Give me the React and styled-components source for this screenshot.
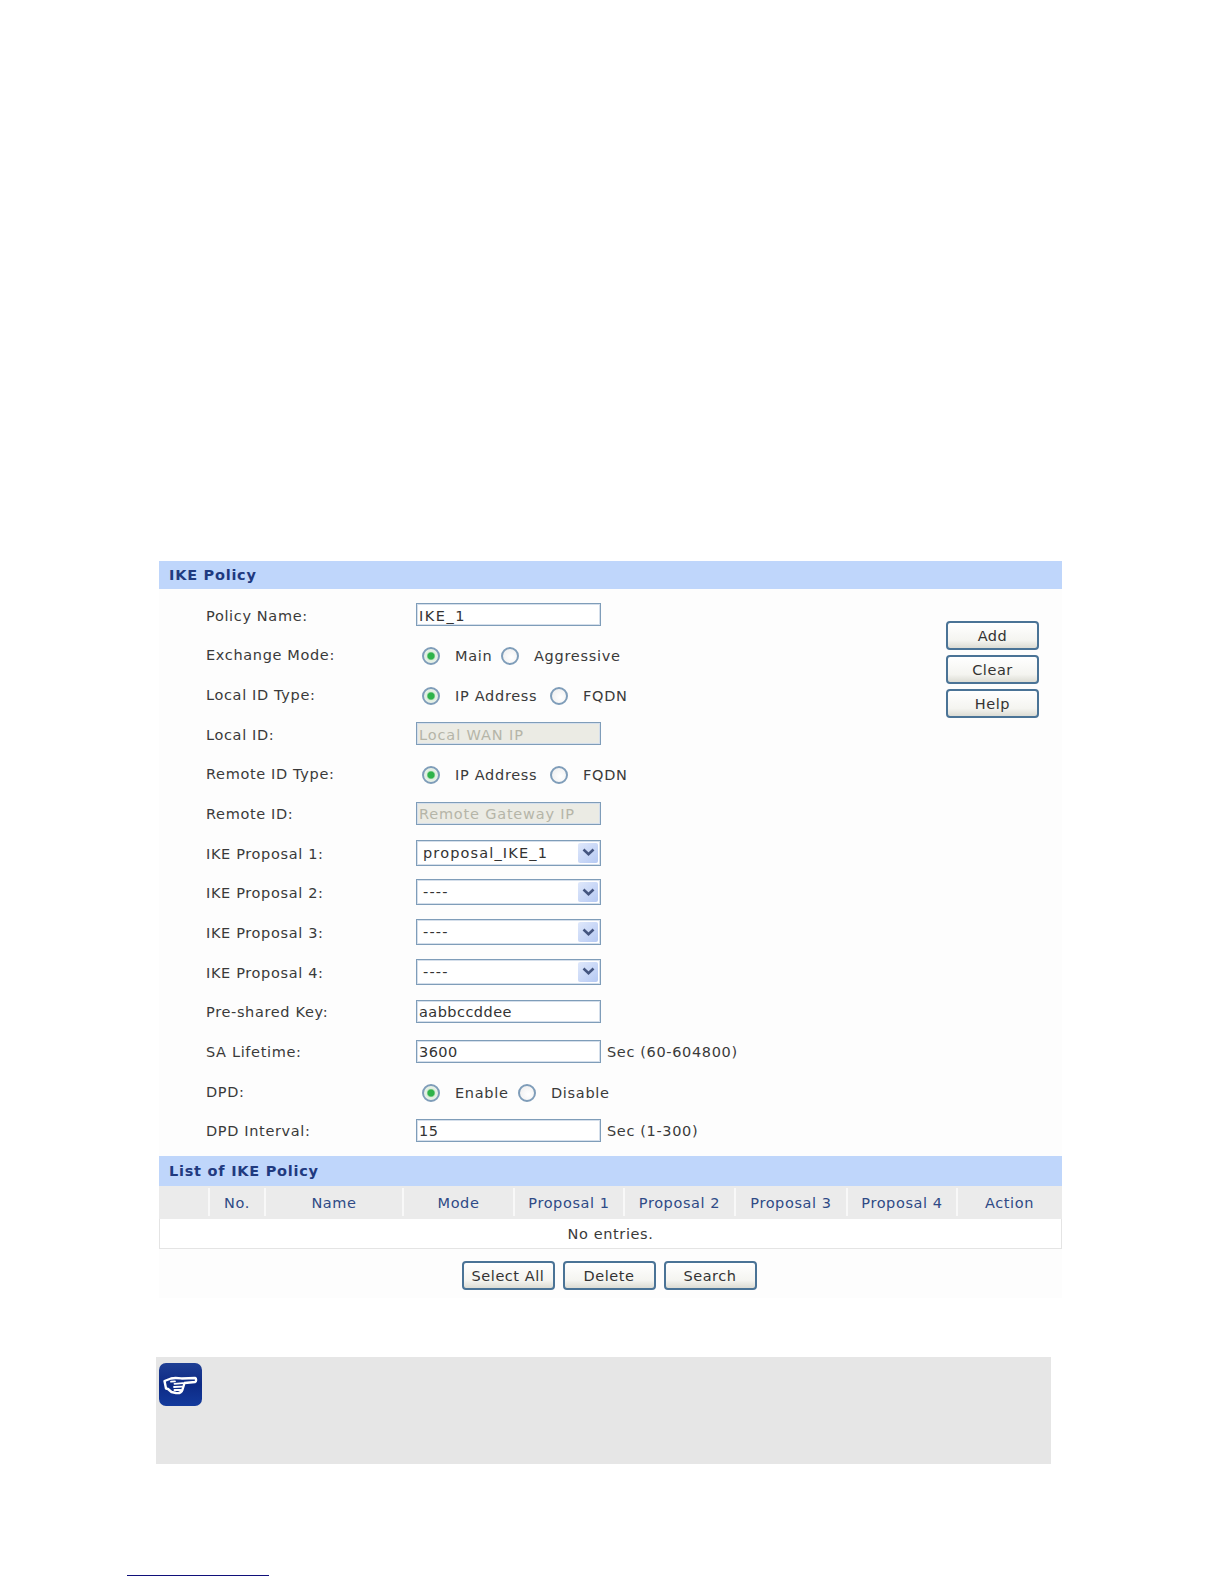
import styled, { createGlobalStyle } from 'styled-components';

const GlobalStyle = createGlobalStyle`
  html, body {
    margin: 0;
    padding: 0;
    background: #fff;
  }
  body {
    font-family: "DejaVu Sans", Verdana, sans-serif;
    font-size: 14px;
    color: #333;
  }
`;

const Page = styled.div`
  width: 1224px;
  height: 1584px;
  box-sizing: border-box;
  padding-top: 561px;
  overflow: hidden;
`;

const Panel = styled.section`
  width: 903px;
  margin-left: 159px;
  background: #fdfdfd;
`;

const SectionBar = styled.h2`
  margin: 0;
  height: ${(p) => p.$height}px;
  line-height: ${(p) => p.$height}px;
  padding-left: 10px;
  background: #bfd6fb;
  color: #1f3a80;
  font-size: 14.5px;
  font-weight: bold;
  letter-spacing: 0.75px;
`;

const FormArea = styled.div`
  display: flex;
  justify-content: space-between;
`;

const Form = styled.div`
  padding: 6px 0 6px 47px;
`;

const Row = styled.div`
  display: flex;
  align-items: center;
  height: 39.67px;
`;

const Label = styled.label`
  width: 210px;
  padding-top: 2px;
  font-size: 14.5px;
  letter-spacing: 0.65px;
  color: #3a3a3a;
`;

const TextInput = styled.input`
  width: 185px;
  height: 23px;
  box-sizing: border-box;
  padding: 2px 2px 0;
  border: 1px solid #7f9db9;
  box-shadow: inset 0 0 0 1px #d5dfeb;
  background: ${(p) => (p.disabled ? '#ebebe4' : '#fff')};
  color: #333;
  font-family: inherit;
  font-size: 14.5px;
  letter-spacing: ${(p) => p.$tracking || 0.45}px;
  outline: none;
  &:disabled {
    opacity: 1;
    -webkit-text-fill-color: #b5b5a8;
  }
`;

const Hint = styled.span`
  margin-left: 6px;
  padding-top: 2px;
  font-size: 14.5px;
  letter-spacing: 0.65px;
  color: #3a3a3a;
`;

const RadioGroup = styled.div`
  display: flex;
  align-items: center;
  padding: 4px 0 0 6px;
`;

const RadioDot = styled.span`
  display: block;
  width: 18px;
  height: 18px;
  box-sizing: border-box;
  flex: none;
  border-radius: 50%;
  border: 2px solid #7f9db9;
  background: ${(p) =>
    p.$on
      ? 'radial-gradient(circle, #2fb34a 0 3px, #dfeedf 4.5px, #f6f6f6 100%)'
      : 'radial-gradient(circle at 60% 60%, #fff 0, #ececec 100%)'};
`;

const RadioText = styled.span`
  box-sizing: border-box;
  width: ${(p) => p.$span}px;
  margin-left: 15px;
  font-size: 14.5px;
  letter-spacing: 0.7px;
  white-space: nowrap;
  color: #3a3a3a;
`;

const SelectWrap = styled.div`
  position: relative;
  width: 185px;
  height: 26px;
`;

const SelectBox = styled.select`
  display: block;
  width: 100%;
  height: 100%;
  box-sizing: border-box;
  padding: 0 0 0 6px;
  appearance: none;
  border: 1px solid #7f9db9;
  box-shadow: inset 0 0 0 1px #d5dfeb;
  border-radius: 0;
  background: #fff;
  color: #333;
  font-family: inherit;
  font-size: 14.5px;
  letter-spacing: 1.15px;
  outline: none;
`;

const SelectArrow = styled.span`
  position: absolute;
  top: 3px;
  right: 3px;
  width: 20px;
  height: 20px;
  display: flex;
  align-items: center;
  justify-content: center;
  border-radius: 2px;
  background: linear-gradient(135deg, #dfe8fb, #b5c9f3);
  pointer-events: none;
`;

const SideButtons = styled.div`
  display: flex;
  flex-direction: column;
  gap: 5px;
  margin: 32px 23px 0 0;
`;

const Button = styled.button`
  width: 93px;
  height: 29px;
  box-sizing: border-box;
  padding: 0;
  border: 2px solid #4a7396;
  border-radius: 4px;
  background: linear-gradient(#fff, #f4f4f0 70%, #dcdcd4);
  color: #333;
  font-family: inherit;
  font-size: 14.5px;
  letter-spacing: 0.55px;
`;

const Table = styled.div`
  border: 1px solid #e4e4e4;
  border-top: 0;
  background: #fff;
`;

const TableHead = styled.div`
  display: grid;
  grid-template-columns: 50px 56px 138px 111px 110px 111px 112px 110px 1fr;
  height: 33px;
  margin: 0 -1px;
  background: #ebebeb;
`;

const HeadCell = styled.div`
  position: relative;
  display: flex;
  align-items: center;
  justify-content: center;
  color: #2f4a86;
  font-size: 14.5px;
  letter-spacing: 0.6px;
  &:not(:last-child)::after {
    content: "";
    position: absolute;
    right: -1px;
    top: 2px;
    bottom: 3px;
    width: 2px;
    background: #f8f8f8;
  }
`;

const EmptyRow = styled.div`
  height: 29px;
  line-height: 31px;
  text-align: center;
  font-size: 14.5px;
  letter-spacing: 0.6px;
  color: #3a3a3a;
`;

const ActionBar = styled.div`
  display: flex;
  justify-content: center;
  gap: 8px;
  padding: 12px 3px 8px 0;
`;

const Note = styled.aside`
  width: 895px;
  height: 107px;
  box-sizing: border-box;
  margin: 59px 0 0 156px;
  padding: 6px 0 0 3px;
  background: #e6e6e6;
`;

const FootLine = styled.div`
  width: 142px;
  height: 1px;
  margin: 111px 0 0 127px;
  background: #10107a;
`;

const Chevron = () => (
  <svg width="13" height="9" viewBox="0 0 13 9">
    <path d="M1.5 1.5 L6.5 6.2 L11.5 1.5" fill="none" stroke="#44557f" strokeWidth="2.6" />
  </svg>
);

const HandIcon = () => (
  <svg width="43" height="43" viewBox="0 0 43 43" style={{ display: 'block' }}>
    <defs>
      <linearGradient id="noteBg" x1="0" y1="0" x2="0" y2="1">
        <stop offset="0" stopColor="#1f3f94" />
        <stop offset="0.5" stopColor="#0d2a85" />
        <stop offset="1" stopColor="#133a9c" />
      </linearGradient>
    </defs>
    <rect x="0" y="0" width="43" height="43" rx="7" fill="url(#noteBg)" />
    <path
      d="M5.5 18 L12 15.5 C16 14.5 19 15 23 15.5 L36 15 C37.5 15.5 37.5 18.5 36 19 L25.5 20 L23.5 26.5 C22.5 29.5 20 30.5 17 30 L12.5 29 L9 26 L7 25.5 Z"
      fill="none"
      stroke="#fff"
      strokeWidth="2.4"
      strokeLinejoin="round"
    />
    <path
      d="M15.5 20.8 L24 20.2 M15 24 L23 23.6 M15.5 27 L21.5 27 M12 18.6 L16 18.4"
      fill="none"
      stroke="#fff"
      strokeWidth="1.8"
      strokeLinecap="round"
    />
  </svg>
);

const Radios = ({ options }) => (
  <RadioGroup>
    {options.map(([text, span], i) => (
      <RadioOption key={text} text={text} span={span} on={i === 0} />
    ))}
  </RadioGroup>
);

const RadioOption = ({ text, span, on }) => (
  <>
    <RadioDot $on={on} />
    <RadioText $span={span}>{text}</RadioText>
  </>
);

const Select = ({ value }) => (
  <SelectWrap>
    <SelectBox defaultValue={value}>
      <option>{value}</option>
    </SelectBox>
    <SelectArrow>
      <Chevron />
    </SelectArrow>
  </SelectWrap>
);

const columns = ['', 'No.', 'Name', 'Mode', 'Proposal 1', 'Proposal 2', 'Proposal 3', 'Proposal 4', 'Action'];

export default function App() {
  return (
    <Page>
      <GlobalStyle />
      <Panel>
        <SectionBar $height={28}>IKE Policy</SectionBar>
        <FormArea>
          <Form>
            <Row>
              <Label>Policy Name:</Label>
              <TextInput defaultValue="IKE_1" $tracking={1.5} />
            </Row>
            <Row>
              <Label>Exchange Mode:</Label>
              <Radios options={[['Main', 46], ['Aggressive', 100]]} />
            </Row>
            <Row>
              <Label>Local ID Type:</Label>
              <Radios options={[['IP Address', 95], ['FQDN', 60]]} />
            </Row>
            <Row>
              <Label>Local ID:</Label>
              <TextInput disabled defaultValue="Local WAN IP" $tracking={0.9} />
            </Row>
            <Row>
              <Label>Remote ID Type:</Label>
              <Radios options={[['IP Address', 95], ['FQDN', 60]]} />
            </Row>
            <Row>
              <Label>Remote ID:</Label>
              <TextInput disabled defaultValue="Remote Gateway IP" $tracking={0.8} />
            </Row>
            <Row>
              <Label>IKE Proposal 1:</Label>
              <Select value="proposal_IKE_1" />
            </Row>
            <Row>
              <Label>IKE Proposal 2:</Label>
              <Select value="----" />
            </Row>
            <Row>
              <Label>IKE Proposal 3:</Label>
              <Select value="----" />
            </Row>
            <Row>
              <Label>IKE Proposal 4:</Label>
              <Select value="----" />
            </Row>
            <Row>
              <Label>Pre-shared Key:</Label>
              <TextInput defaultValue="aabbccddee" />
            </Row>
            <Row>
              <Label>SA Lifetime:</Label>
              <TextInput defaultValue="3600" />
              <Hint>Sec (60-604800)</Hint>
            </Row>
            <Row>
              <Label>DPD:</Label>
              <Radios options={[['Enable', 63], ['Disable', 70]]} />
            </Row>
            <Row>
              <Label>DPD Interval:</Label>
              <TextInput defaultValue="15" />
              <Hint>Sec (1-300)</Hint>
            </Row>
          </Form>
          <SideButtons>
            <Button>Add</Button>
            <Button>Clear</Button>
            <Button>Help</Button>
          </SideButtons>
        </FormArea>
        <SectionBar $height={30}>List of IKE Policy</SectionBar>
        <Table>
          <TableHead>
            {columns.map((name, i) => (
              <HeadCell key={i}>{name}</HeadCell>
            ))}
          </TableHead>
          <EmptyRow>No entries.</EmptyRow>
        </Table>
        <ActionBar>
          <Button>Select All</Button>
          <Button>Delete</Button>
          <Button>Search</Button>
        </ActionBar>
      </Panel>
      <Note>
        <HandIcon />
      </Note>
      <FootLine />
    </Page>
  );
}
